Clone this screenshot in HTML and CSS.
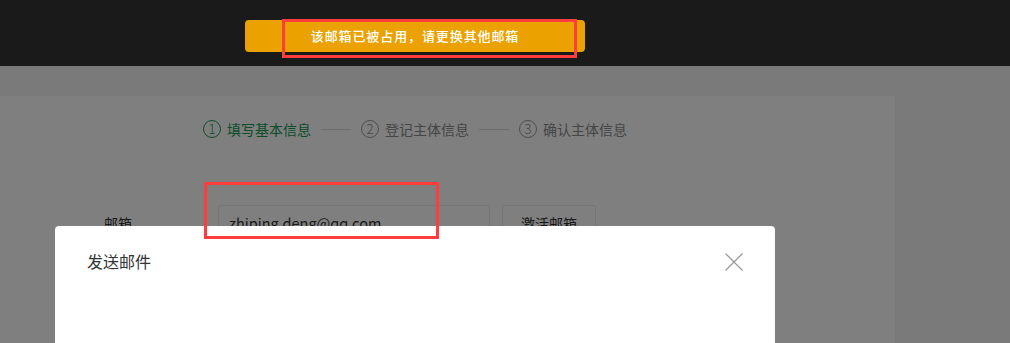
FILE: index.html
```html
<!DOCTYPE html>
<html lang="zh-CN">
<head>
  <meta charset="UTF-8" />
  <meta name="viewport" content="width=device-width, initial-scale=1.0" />
  <title>填写基本信息</title>
  <link rel="stylesheet" href="styles.css">
</head>
<body>
  <div class="page">
    <header class="topbar"></header>

    <main class="content">
      <section class="card">
        <div class="steps">
          <div class="step active">
            <span class="step-num">1</span>
            <span class="step-name">填写基本信息</span>
          </div>
          <span class="step-line"></span>
          <div class="step">
            <span class="step-num">2</span>
            <span class="step-name">登记主体信息</span>
          </div>
          <span class="step-line"></span>
          <div class="step">
            <span class="step-num">3</span>
            <span class="step-name">确认主体信息</span>
          </div>
        </div>

        <div class="form-row">
          <label class="form-label">邮箱</label>
          <div class="form-input">zhiping.deng@qq.com</div>
          <button class="btn">激活邮箱</button>
        </div>
      </section>
    </main>
  </div>

  <!-- dimmed layer under the dialog -->
  <div class="mask"></div>

  <div class="toast">该邮箱已被占用，请更换其他邮箱</div>

  <div class="modal">
    <div class="modal-header">
      <span class="modal-title">发送邮件</span>
      <span class="modal-close">
        <svg width="18" height="18" viewBox="0 0 18 18">
          <path d="M0.5 0.5 L17.5 17.5 M17.5 0.5 L0.5 17.5" stroke="#999" stroke-width="1.2" fill="none"/>
        </svg>
      </span>
    </div>
  </div>

  <!-- review marks -->
  <div class="mark mark-toast"></div>
  <div class="mark mark-email"></div>
</body>
</html>
```

FILE: styles.css
```css
* {
  margin: 0;
  padding: 0;
  box-sizing: border-box;
}

body {
  font-family: "Noto Sans CJK SC", "Noto Sans", sans-serif;
  background: #f4f4f4;
  color: #333;
  overflow: hidden;
}

.topbar {
  height: 66px;
  background: #343434;
}

.content {
  padding-top: 30px;
}

.card {
  width: 895px;
  height: 400px;
  background: #fff;
  padding-top: 24px;
}

/* Steps */
.steps {
  display: flex;
  align-items: center;
  padding-left: 203px;
  height: 18px;
}

.step {
  display: flex;
  align-items: center;
  gap: 6px;
  color: #8a8a8a;
  font-size: 14px;
  line-height: 18px;
}

.step-num {
  width: 18px;
  height: 18px;
  border: 1px solid #9a9a9a;
  border-radius: 50%;
  display: flex;
  align-items: center;
  justify-content: center;
  font-size: 13px;
  font-weight: 300;
}

.step.active {
  color: #169a52;
}

.step.active .step-num {
  border-color: #169a52;
}

.step-line {
  width: 30px;
  height: 1px;
  background: #d8d8d8;
  margin: 0 10px;
}

/* Form */
.form-row {
  display: flex;
  align-items: center;
  margin-top: 67px;
}

.form-label {
  width: 132px;
  text-align: right;
  font-size: 14px;
  color: #333;
}

.form-input {
  width: 272px;
  height: 36px;
  margin-left: 86px;
  border: 1px solid #ececec;
  border-radius: 2px;
  padding: 0 10px;
  font-size: 14.5px;
  line-height: 34px;
  color: #333;
}

.btn {
  width: 94px;
  height: 36px;
  margin-left: 12px;
  border: 1px solid #ececec;
  border-radius: 2px;
  background: #fff;
  font-family: inherit;
  font-size: 14px;
  color: #333;
}

/* Overlays */
.mask {
  position: fixed;
  inset: 0;
  background: rgba(0, 0, 0, 0.5);
}

.toast {
  position: fixed;
  left: 245px;
  top: 20px;
  width: 340px;
  height: 32px;
  background: #eba100;
  border-radius: 4px;
  color: #fff;
  font-size: 13px;
  font-weight: 500;
  letter-spacing: 0.9px;
  line-height: 32px;
  text-align: center;
}

.modal {
  position: fixed;
  left: 55px;
  top: 226px;
  width: 720px;
  height: 300px;
  background: #fff;
  border-radius: 4px;
}

.modal-header {
  display: flex;
  justify-content: space-between;
  align-items: center;
  padding: 26px 32px 0 32px;
  height: 74px;
}

.modal-title {
  font-size: 16px;
  line-height: 22px;
  color: #333;
  align-self: flex-start;
  margin-top: -2px;
}

.modal-close {
  display: flex;
  align-self: flex-start;
  margin-top: 1px;
}

.mark {
  position: fixed;
  border: 3px solid #ff3d3d;
}

.mark-toast {
  left: 282px;
  top: 19px;
  width: 295px;
  height: 39px;
}

.mark-email {
  left: 204px;
  top: 182px;
  width: 235px;
  height: 57px;
}
```
